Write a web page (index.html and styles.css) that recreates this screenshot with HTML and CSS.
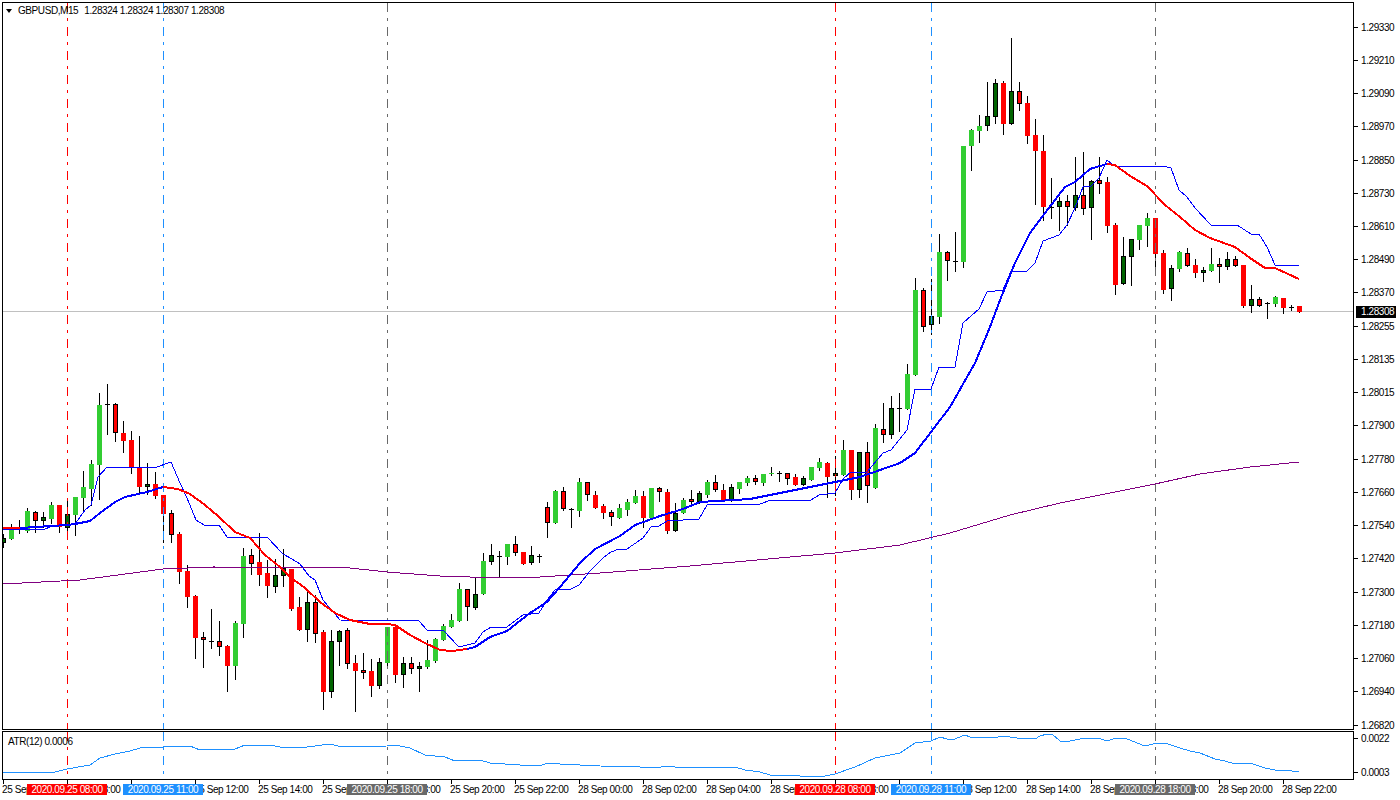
FILE: index.html
```html
<!DOCTYPE html>
<html lang="en">
<head>
    <meta charset="UTF-8">
    <title>GBPUSD,M15</title>
    <link rel="stylesheet" href="styles.css">
</head>
<body>
    <div class="terminal">
        <!-- price pane -->
        <div class="pane-row price-row">
            <div class="plot">
                <svg class="chart" id="priceChart" viewBox="3 3 1350 726"></svg>
                <div class="legend">
                    <span class="legend-arrow"></span>
                    <span class="legend-symbol">GBPUSD,M15</span>
                    <span>1.28324 1.28324 1.28307 1.28308</span>
                </div>
            </div>
            <div class="price-axis">
                <div class="axis-label">1.29330</div>
                <div class="axis-label">1.29210</div>
                <div class="axis-label">1.29090</div>
                <div class="axis-label">1.28970</div>
                <div class="axis-label">1.28850</div>
                <div class="axis-label">1.28730</div>
                <div class="axis-label">1.28610</div>
                <div class="axis-label">1.28490</div>
                <div class="axis-label">1.28370</div>
                <div class="axis-label">1.28255</div>
                <div class="axis-label">1.28135</div>
                <div class="axis-label">1.28015</div>
                <div class="axis-label">1.27900</div>
                <div class="axis-label">1.27780</div>
                <div class="axis-label">1.27660</div>
                <div class="axis-label">1.27540</div>
                <div class="axis-label">1.27420</div>
                <div class="axis-label">1.27300</div>
                <div class="axis-label">1.27180</div>
                <div class="axis-label">1.27060</div>
                <div class="axis-label">1.26940</div>
                <div class="axis-label">1.26820</div>
                <div class="price-tag">1.28308</div>
            </div>
        </div>

        <!-- ATR pane -->
        <div class="pane-row atr-row">
            <div class="plot">
                <svg class="chart" id="atrChart" viewBox="3 732 1350 47"></svg>
                <div class="legend atr-legend">ATR(12) 0.0006</div>
            </div>
            <div class="atr-axis">
                <div class="axis-label">0.0022</div>
                <div class="axis-label">0.0003</div>
            </div>
        </div>

        <!-- time axis -->
        <div class="time-axis">
            <div class="time-cell"><span>25 Sep 06:00</span></div>
            <div class="time-cell"><span>25 Sep 08:00</span></div>
            <div class="time-cell"><span>25 Sep 10:00</span></div>
            <div class="time-cell"><span>25 Sep 12:00</span></div>
            <div class="time-cell"><span>25 Sep 14:00</span></div>
            <div class="time-cell"><span>25 Sep 16:00</span></div>
            <div class="time-cell"><span>25 Sep 18:00</span></div>
            <div class="time-cell"><span>25 Sep 20:00</span></div>
            <div class="time-cell"><span>25 Sep 22:00</span></div>
            <div class="time-cell"><span>28 Sep 00:00</span></div>
            <div class="time-cell"><span>28 Sep 02:00</span></div>
            <div class="time-cell"><span>28 Sep 04:00</span></div>
            <div class="time-cell"><span>28 Sep 06:00</span></div>
            <div class="time-cell"><span>28 Sep 08:00</span></div>
            <div class="time-cell"><span>28 Sep 10:00</span></div>
            <div class="time-cell"><span>28 Sep 12:00</span></div>
            <div class="time-cell"><span>28 Sep 14:00</span></div>
            <div class="time-cell"><span>28 Sep 16:00</span></div>
            <div class="time-cell"><span>28 Sep 18:00</span></div>
            <div class="time-cell"><span>28 Sep 20:00</span></div>
            <div class="time-cell"><span>28 Sep 22:00</span></div>

            <!-- session markers on top of the labels -->
            <div class="tag tag-red tag-a">2020.09.25 08:00</div>
            <div class="tag tag-blue tag-b">2020.09.25 11:00</div>
            <div class="tag tag-gray tag-c">2020.09.25 18:00</div>
            <div class="tag tag-red tag-d">2020.09.28 08:00</div>
            <div class="tag tag-blue tag-e">2020.09.28 11:00</div>
            <div class="tag tag-gray tag-f">2020.09.28 18:00</div>
        </div>
    </div>

    <script src="chart.js"></script>
</body>
</html>
```

FILE: styles.css
```css
/* reset */
* {
    margin: 0;
    padding: 0;
    box-sizing: border-box;
}

body {
    width: 1400px;
    height: 800px;
    background: #fff;
    color: #000;
    font-family: "Liberation Sans", Arial, sans-serif;
    font-size: 10px;
    letter-spacing: -0.42px;
    overflow: hidden;
}

/* window frame */
.terminal {
    display: flex;
    flex-direction: column;
    padding: 2px 0 0 2px;
}

.pane-row {
    display: flex;
}

.price-row {
    height: 728px;
}

.atr-row {
    height: 49px;
    margin-top: 1px;
}

.plot {
    position: relative;
    width: 1352px;
    border: 1px solid #000;
}

.chart {
    display: block;
    width: 1350px;
    height: 100%;
}

/* chart classes */
.wick { fill: #000; }
.bull { fill: #32cd32; }
.bear { fill: #ff0000; }
.bull-open { fill: #006400; stroke: #000; }
.bear-open { fill: #ff0000; stroke: #000; }
.line { fill: none; shape-rendering: crispEdges; }
.ma-blue { stroke: #0000ff; stroke-width: 2; }
.ma-red { stroke: #ff0000; stroke-width: 2; }
.band { stroke: #0000ff; stroke-width: 1; }
.long-ma { stroke: #800080; stroke-width: 1; }
.atr { stroke: #1e90ff; stroke-width: 1; }
.bid { stroke: #c0c0c0; stroke-width: 1; }
.marker { stroke-width: 1; stroke-dasharray: 9 6 3 6; }
.marker-red { stroke: #ff0000; }
.marker-blue { stroke: #1e90ff; }
.marker-gray { stroke: #696969; }

/* legend over the chart */
.legend {
    position: absolute;
    top: 2px;
    left: 3px;
    display: flex;
    align-items: center;
    line-height: 12px;
    white-space: nowrap;
}

.legend-arrow {
    width: 0;
    height: 0;
    margin-right: 6px;
    border-left: 3.5px solid transparent;
    border-right: 3.5px solid transparent;
    border-top: 4px solid #000;
}

.legend-symbol {
    margin-right: 6px;
}

.atr-legend {
    top: 4px;
    left: 5px;
}

/* right axes */
.price-axis {
    position: relative;
    padding-top: 8.5px;
}

.axis-label {
    display: flex;
    align-items: center;
    height: 33.24px;
}

.axis-label::before {
    content: "";
    width: 4px;
    height: 1px;
    margin-right: 3px;
    background: #000;
}

.atr-axis {
    display: flex;
    flex-direction: column;
    gap: 22px;
    padding-top: 1px;
}

.atr-axis .axis-label {
    height: 12px;
}

.price-tag {
    position: absolute;
    top: 304px;
    left: 2px;
    width: 40px;
    height: 12px;
    padding-left: 5px;
    background: #000;
    color: #fff;
    line-height: 12px;
}

/* time axis */
.time-axis {
    position: relative;
    display: flex;
    padding-left: 1px;
}

.time-cell {
    flex: 0 0 64px;
    white-space: nowrap;
}

.time-cell::before {
    content: "";
    display: block;
    width: 1px;
    height: 4px;
    background: #000;
}

.time-cell span {
    display: block;
    margin-left: -1px;
    line-height: 12px;
}

.tag {
    position: absolute;
    top: 4px;
    width: 80px;
    height: 11px;
    color: #fff;
    line-height: 11px;
    text-align: center;
}

.tag-red { background: #ff0000; }
.tag-blue { background: #1e90ff; }
.tag-gray { background: #696969; }

.tag-a { left: 25px; }
.tag-b { left: 121px; }
.tag-c { left: 345px; }
.tag-d { left: 793px; }
.tag-e { left: 889px; }
.tag-f { left: 1113px; }
```

FILE: chart.js
```js
// [type, high, top, bottom, low]  g/r plain, d/b outlined, x doji; candle n sits at x = 3 + 8n
const candles = [
    ['d',534,538,543,547],['g',524,528,539,539],['x',520,527,528,533],['g',508,511,531,532],
    ['b',511,512,521,532],['d',512,517,521,527],['g',502,505,519,523],['r',505,505,527,532],
    ['d',501,514,528,530],['g',497,497,515,535],['g',471,487,498,510],['g',460,464,489,505],
    ['g',393,405,465,499],['x',384,404,405,434],['b',403,404,433,441],['r',421,433,441,452],
    ['r',431,440,467,473],['r',436,468,487,493],['d',463,484,487,494],['r',472,484,496,498],
    ['r',495,495,514,542],['b',510,513,535,542],['r',532,534,572,583],['r',565,571,597,607],
    ['r',595,596,638,658],['b',632,637,640,667],['x',609,641,642,648],['b',621,641,647,655],
    ['r',645,646,666,691],['g',621,623,666,679],['g',548,556,624,637],['b',549,555,564,574],
    ['r',533,562,575,585],['r',560,573,586,597],['d',559,575,587,592],['d',549,568,576,586],
    ['r',569,569,609,610],['r',597,607,630,630],['d',592,602,630,641],['b',595,602,634,642],
    ['r',630,632,692,709],['d',630,641,692,697],['d',630,631,642,665],['b',628,630,664,668],
    ['r',655,663,671,711],['b',653,670,673,678],['r',659,671,686,696],['d',658,662,686,688],
    ['g',627,627,663,666],['r',625,627,675,682],['d',657,663,675,687],['b',657,663,669,673],
    ['d',662,666,669,691],['g',640,660,667,668],['g',638,639,661,662],['g',624,626,640,640],
    ['g',614,620,627,627],['g',583,589,621,621],['b',589,589,607,620],['d',578,594,608,609],
    ['g',553,561,594,594],['d',544,555,562,564],['x',551,556,557,576],['g',544,544,557,564],
    ['b',536,544,553,555],['r',552,552,564,564],['d',546,555,563,564],['x',554,556,557,562],
    ['b',502,507,523,537],['g',490,491,523,523],['b',487,491,509,510],['x',508,509,510,527],
    ['g',478,482,511,516],['b',482,482,495,500],['r',491,495,508,508],['r',504,506,513,518],
    ['b',510,512,517,525],['g',504,508,518,518],['g',499,502,510,515],['g',490,496,503,503],
    ['r',491,496,518,527],['g',488,488,518,518],['b',487,488,492,501],['r',489,492,531,533],
    ['d',503,513,531,531],['g',498,500,513,513],['b',490,499,502,505],['d',491,493,502,503],
    ['g',480,482,495,497],['b',475,482,490,491],['r',484,490,501,501],['d',484,487,500,501],
    ['g',482,482,489,493],['g',476,478,483,485],['b',475,478,482,484],['g',474,474,483,485],
    ['g',467,473,474,475],['x',471,473,474,481],['b',473,473,479,484],['r',474,477,485,485],
    ['d',476,478,485,485],['g',467,467,480,480],['g',458,462,468,470],['r',462,463,477,497],
    ['d',456,473,476,495],['g',440,450,475,475],['r',450,450,490,499],['d',452,452,490,497],
    ['b',442,452,486,502],['g',424,428,488,488],['b',403,429,435,442],['d',396,408,435,438],
    ['x',393,408,409,431],['g',364,374,409,409],['g',278,290,375,375],['b',288,290,327,331],
    ['d',279,316,325,334],['g',234,252,317,323],['b',251,252,261,280],['x',232,261,262,271],
    ['g',146,146,262,267],['g',129,130,146,170],['g',115,126,131,142],['d',82,116,126,130],
    ['d',79,83,117,123],['r',81,83,124,134],['d',38,91,124,124],['b',82,91,104,110],
    ['r',96,103,136,143],['r',119,135,151,204],['r',135,151,207,220],['x',178,207,208,218],
    ['d',197,201,207,230],['b',195,201,207,225],['d',157,195,208,210],['b',152,195,209,214],
    ['d',180,181,208,239],['b',157,180,184,193],['r',177,182,226,232],['r',223,225,285,294],
    ['d',237,256,284,284],['d',239,239,257,285],['g',225,225,240,249],['g',213,218,226,246],
    ['r',218,218,254,267],['r',250,253,290,293],['d',265,268,289,300],['g',251,252,269,271],
    ['b',248,253,266,266],['r',259,265,273,277],['d',267,270,273,281],['g',248,264,271,271],
    ['b',258,264,267,282],['d',252,259,267,269],['b',256,259,266,266],['r',265,265,306,307],
    ['d',285,299,306,312],['b',297,299,306,306],['x',302,303,304,318],['g',296,297,304,306],
    ['r',298,298,308,313],['x',305,307,308,310],['r',306,306,312,312]
];

const longMa = '3,584 80,580 163,569 213,567 350,568 387,572 440,576 470,577 540,577 600,573 690,566 835,553 900,545 950,533 1010,515 1060,503 1155,484 1200,474 1250,467 1299,462';

const band = '3,529 45,529 50,527 75,524 85,510 91,505 98,477 107,467 157,467 171,462 180,483 187,498 196,520 204,525 219,525 227,537 267,537 283,554 292,559 300,564 309,576 315,580 323,600 340,620 419,621 427,630 443,630 459,647 475,643 483,632 491,627 507,627 523,615 539,613 547,600 555,590 571,589 579,585 590,571 603,558 611,552 619,549 627,549 643,538 651,527 659,526 667,521 699,519 707,505 715,504 760,504 771,500 811,500 819,495 835,493 843,479 851,472 867,472 883,453 891,450 907,430 915,389 931,389 939,367 955,367 963,323 979,309 987,292 1003,290 1011,271 1027,271 1035,263 1043,241 1059,235 1067,225 1075,208 1083,187 1091,186 1099,178 1107,160 1115,166 1163,166 1171,168 1179,190 1187,197 1195,208 1211,225 1237,225 1251,234 1259,234 1267,247 1275,265 1299,265';

// moving average changes colour with its slope
const maParts = [
    ['ma-red', '3,528 20,528'],
    ['ma-blue', '20,528 67,525 75,524 90,521 100,513 115,502 125,497 147,492 163,487'],
    ['ma-red', '163,487 178,489 190,494 205,505 218,516 235,532 250,538 265,555 280,567 290,577 305,588 320,602 335,613 350,620 370,624 387,624 395,625 410,635 425,643 440,650 452,651 467,649'],
    ['ma-blue', '467,649 475,647 490,637 507,631 530,613 547,602 560,587 580,563 595,549 620,536 635,525 660,516 683,509 700,502 750,499 790,491 835,482 860,477 880,470 900,463 915,453 931,432 950,407 975,363 990,327 1000,300 1015,263 1030,233 1045,213 1065,187 1075,182 1090,169 1100,166 1107,164'],
    ['ma-red', '1107,164 1115,165 1130,176 1147,186 1165,205 1180,217 1195,230 1210,238 1235,247 1250,258 1265,268 1275,268 1299,279']
];

const atr = '3,772 15,772 55,772 67,769 90,765 100,758 115,754 130,751 140,748 163,747 190,746 200,750 235,749 245,745 270,745 280,747 300,748 330,744 342,747 387,746 395,745 410,748 425,755 445,757 455,761 480,760 490,763 520,765 540,766 547,763 560,764 580,765 600,766 640,767 655,768 667,766 675,767 735,767 745,770 760,772 770,775 800,776 820,777 835,774 855,767 875,758 900,753 915,743 931,741 940,737 947,739 955,739 962,736 965,735 970,737 977,738 983,737 998,737 1003,736 1010,737 1017,738 1032,738 1035,739 1040,736 1047,734 1052,734 1060,741 1070,741 1080,739 1097,738 1108,741 1115,738 1125,738 1137,743 1145,746 1153,744 1165,743 1180,748 1190,751 1200,753 1215,759 1225,761 1235,764 1250,763 1265,768 1275,770 1285,770 1299,772';

const markers = [[67, 'red'], [163, 'blue'], [387, 'gray'], [835, 'red'], [931, 'blue'], [1155, 'gray']];

function rect(x, y, w, h, cls) {
    return `<rect x="${x}" y="${y}" width="${w}" height="${h}" class="${cls}" shape-rendering="crispEdges"/>`;
}

function poly(points, cls) {
    return `<polyline points="${points}" class="line ${cls}"/>`;
}

function drawMarkers(top, bottom) {
    return markers.map(([x, colour]) =>
        `<line x1="${x + 0.5}" y1="${top}" x2="${x + 0.5}" y2="${bottom}" class="line marker marker-${colour}"/>`
    ).join('');
}

let price = '';
price += poly(`3,311.5 1353,311.5`, 'bid');

candles.forEach(([type, high, top, bottom, low], n) => {
    const x = 3 + 8 * n;
    price += rect(x, high, 1, low - high + 1, 'wick');
    if (type === 'g') price += rect(x - 2, top, 5, bottom - top, 'bull');
    if (type === 'r') price += rect(x - 2, top, 5, bottom - top, 'bear');
    if (type === 'd') price += rect(x - 1.5, top + 0.5, 4, bottom - top - 1, 'bull-open');
    if (type === 'b') price += rect(x - 1.5, top + 0.5, 4, bottom - top - 1, 'bear-open');
    if (type === 'x') price += rect(x - 2, top, 5, bottom - top, 'wick');
});

price += drawMarkers(3, 730);
price += poly(longMa, 'long-ma');
price += poly(band, 'band');
maParts.forEach(([cls, points]) => { price += poly(points, cls); });

document.getElementById('priceChart').innerHTML = price;
document.getElementById('atrChart').innerHTML = drawMarkers(732, 779) + poly(atr, 'atr');
```
